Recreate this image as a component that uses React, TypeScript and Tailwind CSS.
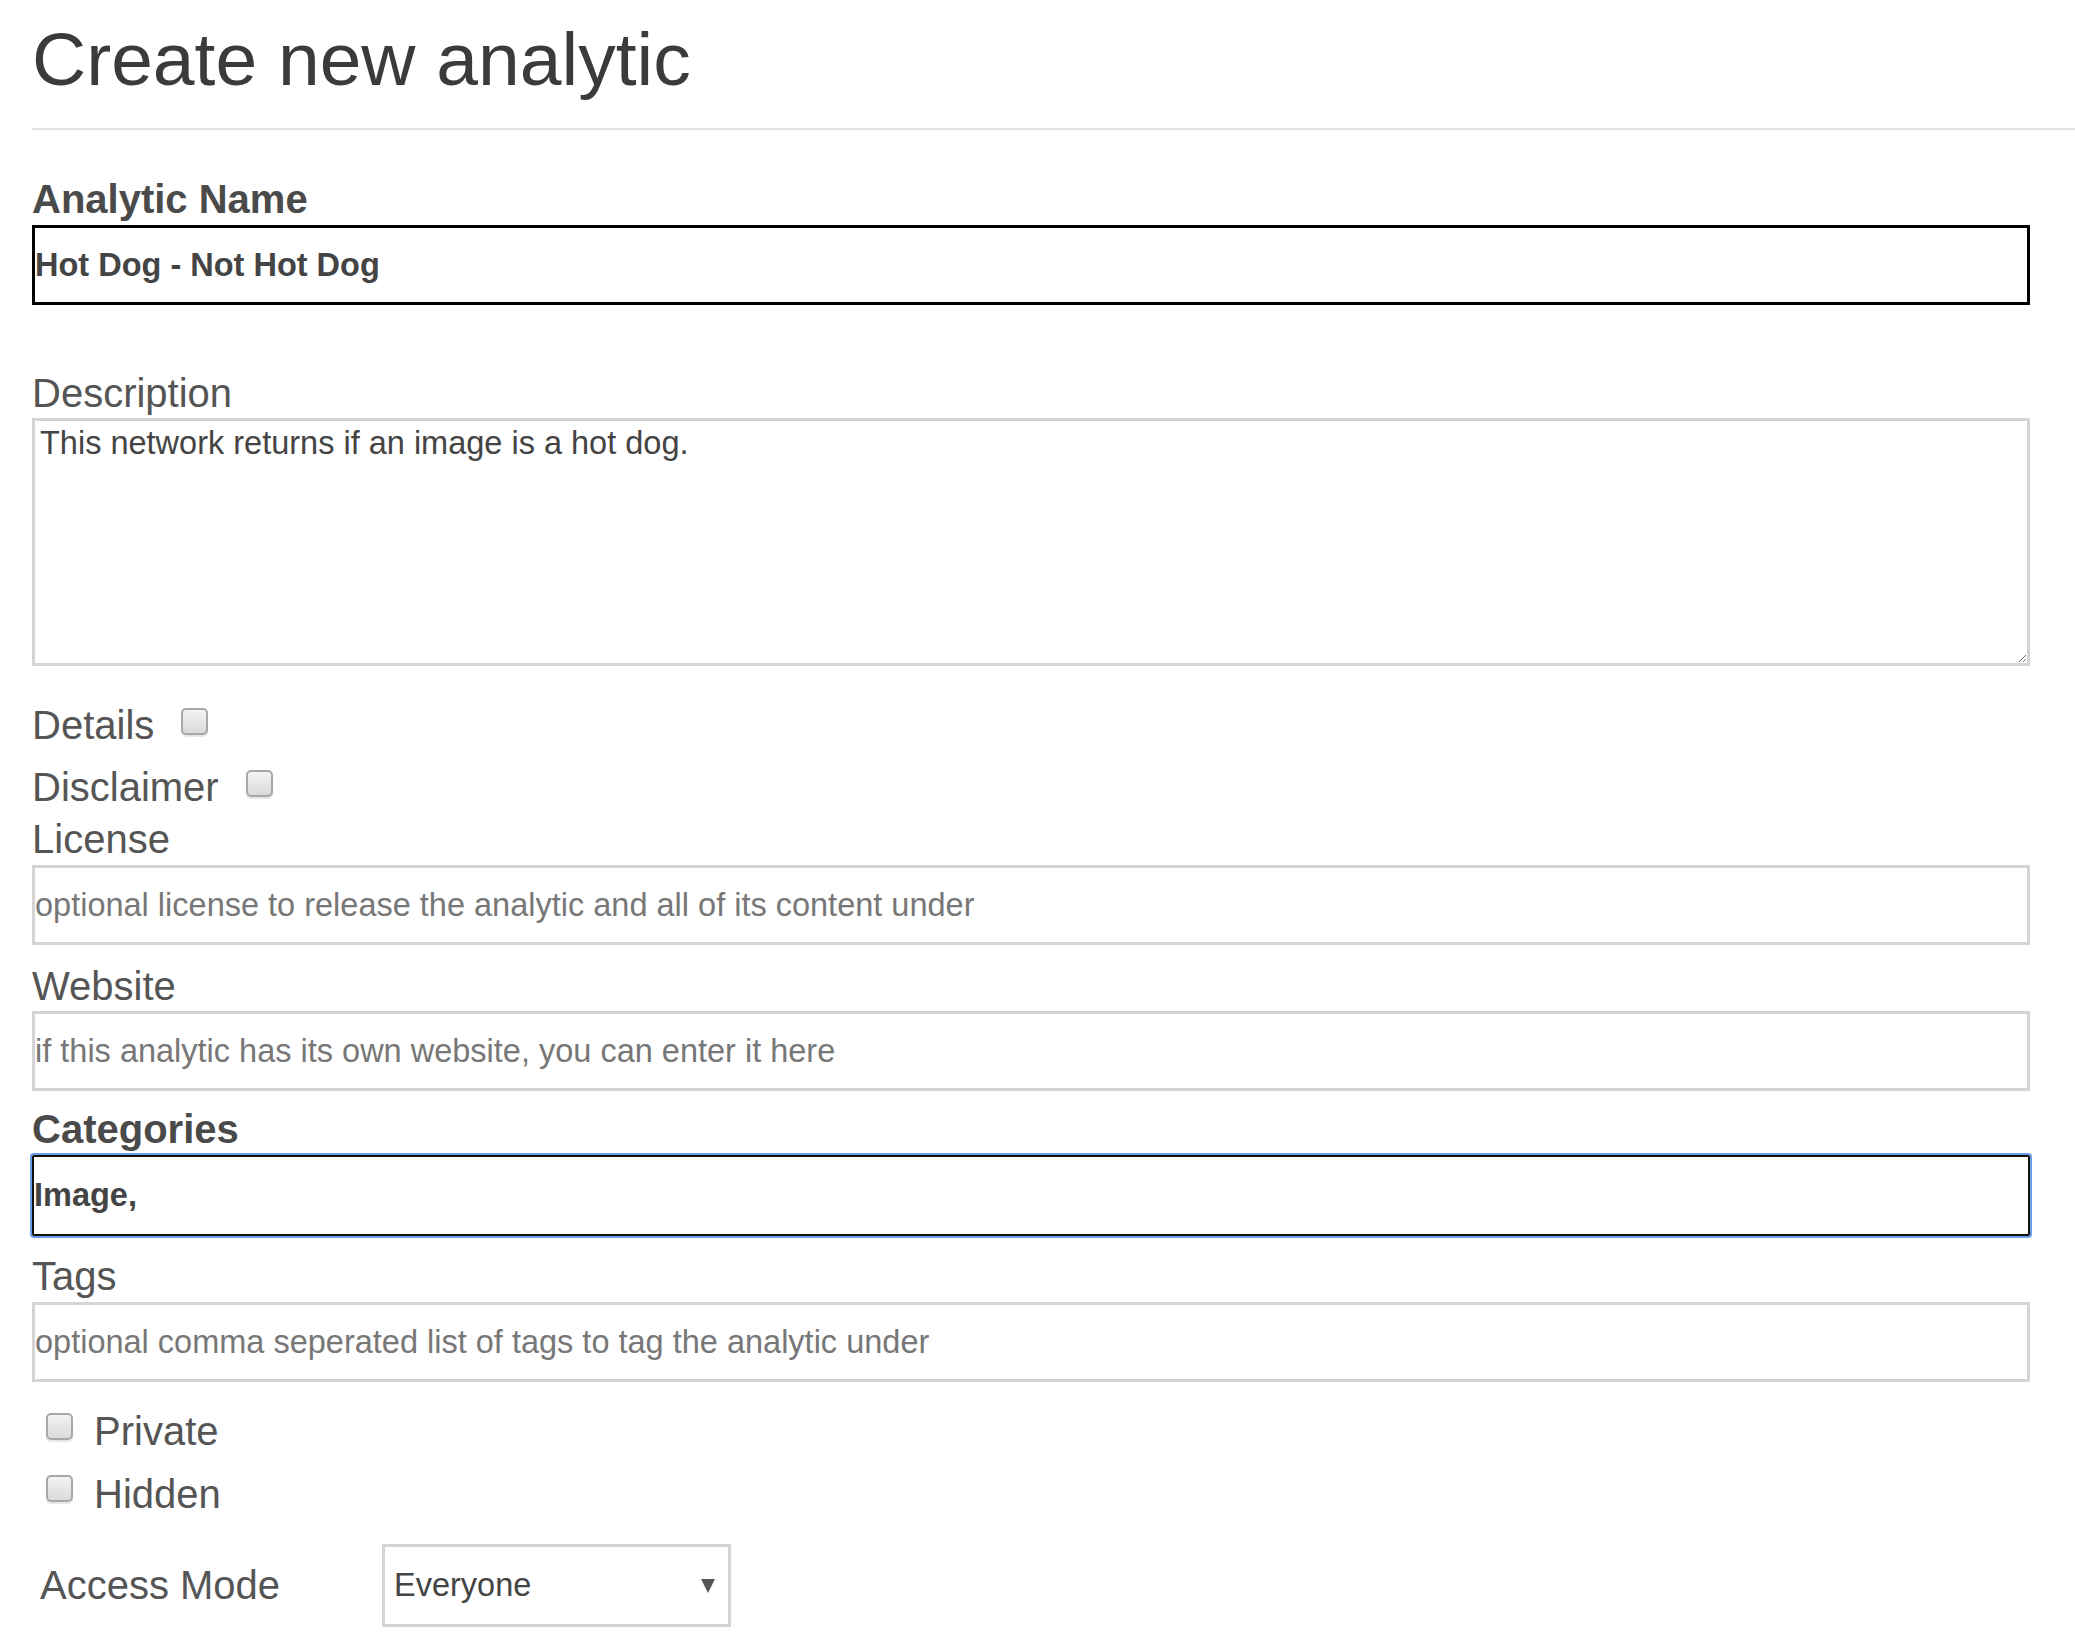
import React from 'react';

const font = "font-['Liberation_Sans',Arial,Helvetica,sans-serif]";

const Check = ({ className = '' }: { className?: string }) => (
    <input
        type="checkbox"
        className={`appearance-none w-[27px] h-[27px] rounded-[5px] border-2 border-[#a8a8a8] bg-linear-to-b from-[#f3f3f3] to-[#dadada] shadow-[0_2px_1px_rgba(0,0,0,0.10)] shrink-0 ${className}`}
    />
);

const App = () => {
    return (
        <div className={`min-h-screen bg-white pl-[32px] ${font}`}>
            <h1 className="pt-[22px] text-[75px] leading-[75px] font-normal text-[#3b3b3b]">Create new analytic</h1>
            <div className="mt-[31px] h-[2px] bg-[#e3e3e3]" />

            <form className="w-[1998px]" onSubmit={e => e.preventDefault()}>
                <label className="block mt-[50px] mb-[6px] text-[40px] leading-[39px] font-bold text-[#4a4a4a]">
                    Analytic Name
                </label>
                <input
                    readOnly
                    value="Hot Dog - Not Hot Dog"
                    className="block w-full h-[80px] border-[3px] border-black pl-0 text-[32.5px] font-bold text-[#444] outline-none"
                />

                <label className="block mt-[69px] mb-[5px] text-[40px] leading-[39px] text-[#555]">Description</label>
                <textarea
                    readOnly
                    value="This network returns if an image is a hot dog."
                    className="block w-full h-[248px] border-[3px] border-[#d4d4d4] pl-[5px] pt-[4px] text-[32.5px] leading-[37px] text-[#444] outline-none"
                />

                <div className="flex items-start gap-[27px] mt-[40px] h-[39px]">
                    <span className="text-[40px] leading-[39px] text-[#555]">Details</span>
                    <Check className="mt-[2px]" />
                </div>
                <div className="flex items-start gap-[27px] mt-[23px] h-[39px]">
                    <span className="text-[40px] leading-[39px] text-[#555]">Disclaimer</span>
                    <Check className="mt-[2px]" />
                </div>

                <label className="block mt-[13px] mb-[6px] text-[40px] leading-[39px] text-[#555]">License</label>
                <input
                    placeholder="optional license to release the analytic and all of its content under"
                    className="block w-full h-[80px] border-[3px] border-[#d4d4d4] pl-0 text-[32.5px] text-[#444] placeholder:text-[#777] outline-none"
                />

                <label className="block mt-[22px] mb-[5px] text-[40px] leading-[39px] text-[#555]">Website</label>
                <input
                    placeholder="if this analytic has its own website, you can enter it here"
                    className="block w-full h-[80px] border-[3px] border-[#d4d4d4] pl-0 text-[32.5px] text-[#444] placeholder:text-[#777] outline-none"
                />

                <label className="block mt-[19px] mb-[6px] text-[40px] leading-[39px] font-bold text-[#4a4a4a]">
                    Categories
                </label>
                <input
                    readOnly
                    value="Image,"
                    className="block w-full h-[81px] border-2 border-[#111] shadow-[0_0_0_2px_#6a9ee8] rounded-[2px] pl-0 text-[32.5px] font-bold text-[#444] outline-none"
                />

                <label className="block mt-[21px] mb-[6px] text-[40px] leading-[39px] text-[#555]">Tags</label>
                <input
                    placeholder="optional comma seperated list of tags to tag the analytic under"
                    className="block w-full h-[80px] border-[3px] border-[#d4d4d4] pl-0 text-[32.5px] text-[#444] placeholder:text-[#777] outline-none"
                />

                <div className="flex items-start gap-[21px] mt-[30px] h-[39px] pl-[14px]">
                    <Check className="mt-[1px]" />
                    <span className="text-[40px] leading-[39px] text-[#555]">Private</span>
                </div>
                <div className="flex items-start gap-[21px] mt-[24px] h-[39px] pl-[14px]">
                    <Check />
                    <span className="text-[40px] leading-[39px] text-[#555]">Hidden</span>
                </div>

                <div className="flex items-center mt-[30px]">
                    <span className="w-[350px] pl-[8px] text-[40px] leading-[39px] text-[#555]">Access Mode</span>
                    <div className="relative w-[349px] h-[83px]">
                        <select
                            defaultValue="everyone"
                            className="appearance-none w-full h-full border-[3px] border-[#d4d4d4] bg-white pl-[9px] text-[32.5px] text-[#444] outline-none"
                        >
                            <option value="everyone">Everyone</option>
                            <option value="owner">Owner only</option>
                        </select>
                        <svg
                            className="pointer-events-none absolute right-[16px] top-[35px]"
                            width="14"
                            height="14"
                            viewBox="0 0 14 14"
                        >
                            <polygon points="0,0 14,0 7,14" fill="#555" />
                        </svg>
                    </div>
                </div>
            </form>
        </div>
    );
};

export default App;
